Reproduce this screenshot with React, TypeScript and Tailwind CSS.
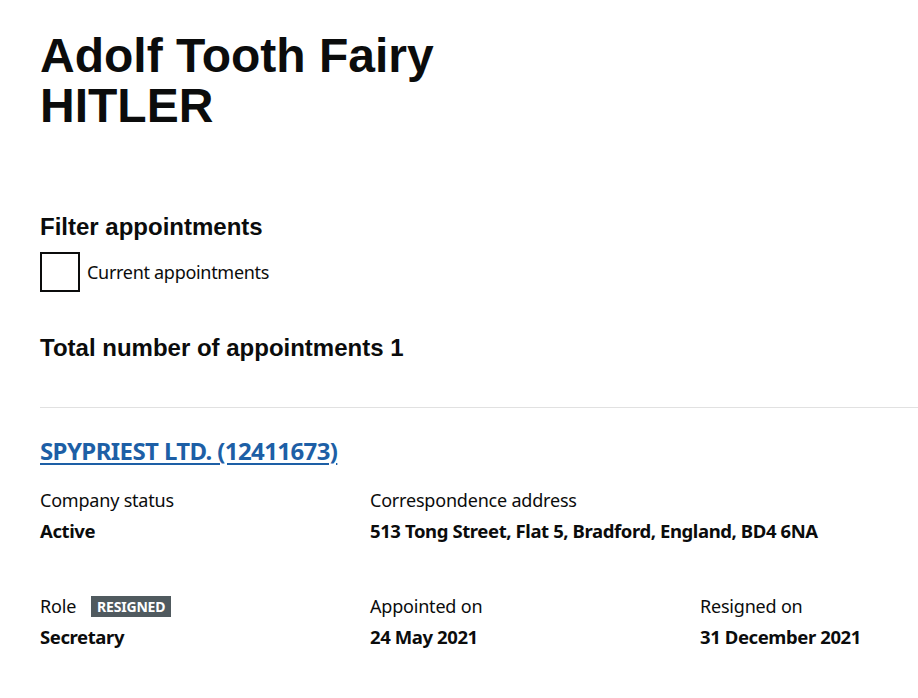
import React from 'react'

const heading = "font-['Liberation_Sans',Arial,sans-serif] font-bold text-[#0b0c0c]"
const body = "font-['Noto_Sans',sans-serif] text-[#0b0c0c]"

// One label/value pair in the appointment summary
function Field({ label, value, tag }: { label: string; value: string; tag?: string }) {
  return (
    <div>
      <div className={`${body} flex items-center text-[18px] leading-[25px] tracking-[-0.2px]`}>
        {label}
        {tag && (
          <span className="ml-[15px] inline-flex h-[21px] items-center bg-[#505a5f] px-[6px] font-['Noto_Sans',sans-serif] text-[14px] font-bold tracking-[-0.2px] text-white">
            {tag}
          </span>
        )}
      </div>
      <div className={`${body} mt-[5px] whitespace-nowrap text-[18.5px] font-bold leading-[25px] tracking-[-0.4px]`}>
        {value}
      </div>
    </div>
  )
}

export default function App() {
  return (
    <div className="min-h-screen overflow-hidden bg-white pl-[40px] pt-[31px]">
      <h1 className={`${heading} text-[48px] leading-[50px]`}>
        Adolf Tooth Fairy
        <br />
        HITLER
      </h1>

      {/* Filter */}
      <h2 className={`${heading} mt-[81px] text-[24px] leading-[30px]`}>Filter appointments</h2>
      <label className="mt-[10px] flex items-center">
        <span className="h-[40px] w-[40px] border-2 border-[#0b0c0c] bg-white" />
        <span className={`${body} ml-[7px] text-[18px] leading-[25px] tracking-[-0.3px]`}>Current appointments</span>
      </label>

      <h2 className={`${heading} mt-[41px] text-[24px] leading-[30px]`}>Total number of appointments 1</h2>

      <div className="mt-[44px] border-t border-[#e1e1e1]" />

      {/* Appointment */}
      <div className="pt-[28px]">
        <a
          href="#"
          className={`${body} text-[24px] font-bold leading-[30px] tracking-[-0.6px] text-[#1d5fa6] underline decoration-[2px] underline-offset-[3px]`}
        >
          SPYPRIEST LTD. (12411673)
        </a>
        <div className="mt-[22px] grid grid-cols-[330px_330px_330px]">
          <Field label="Company status" value="Active" />
          <Field label="Correspondence address" value="513 Tong Street, Flat 5, Bradford, England, BD4 6NA" />
          <div />
        </div>
        <div className="mt-[51px] grid grid-cols-[330px_330px_330px]">
          <Field label="Role" value="Secretary" tag="RESIGNED" />
          <Field label="Appointed on" value="24 May 2021" />
          <Field label="Resigned on" value="31 December 2021" />
        </div>
      </div>
    </div>
  )
}
